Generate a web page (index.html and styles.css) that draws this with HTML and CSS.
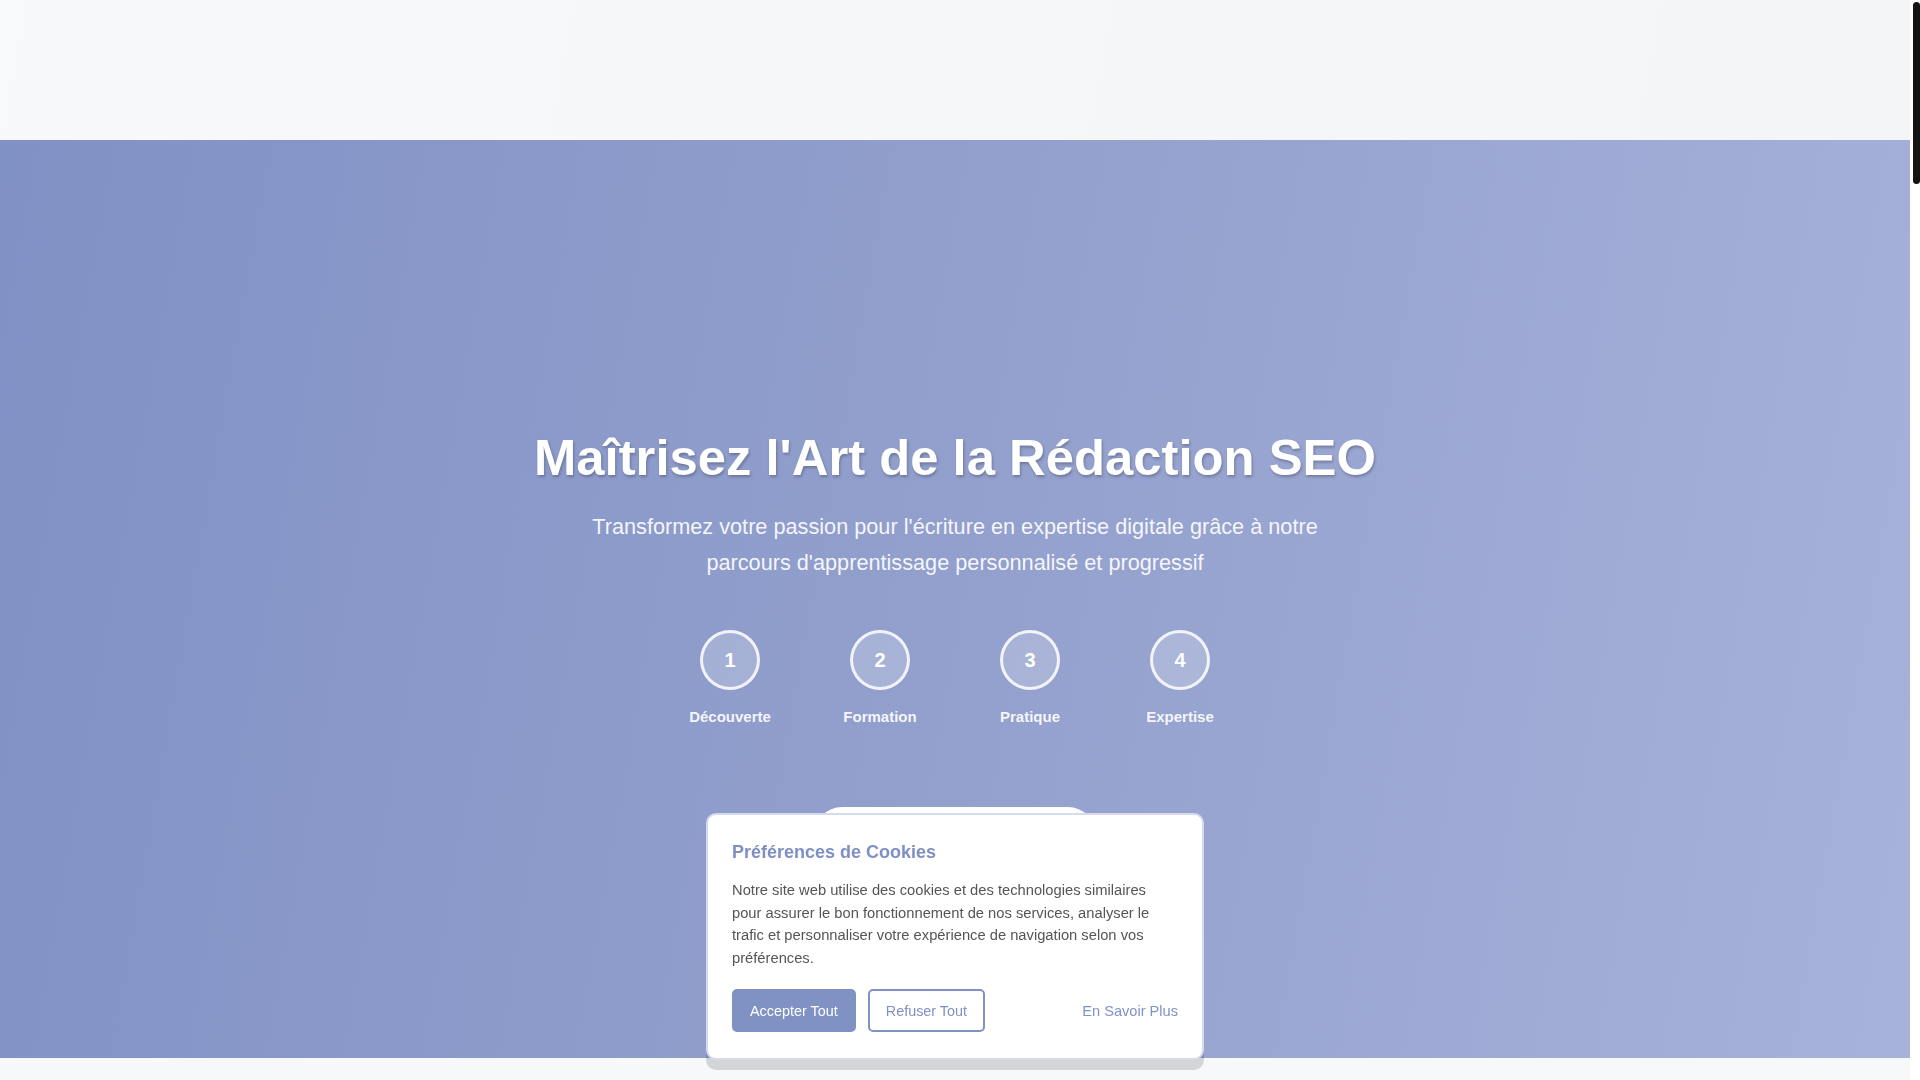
FILE: index.html
```html
<!DOCTYPE html>
<html lang="fr">
<head>
<meta charset="utf-8">
<title>Maîtrisez l'Art de la Rédaction SEO</title>
<link rel="stylesheet" href="styles.css">
</head>
<body>
<header class="site-header"></header>

<section class="hero">
  <div class="hero-inner">
    <h1 class="hero-title">Maîtrisez l'Art de la Rédaction SEO</h1>
    <p class="hero-subtitle">Transformez votre passion pour l'écriture en expertise digitale grâce à notre parcours d'apprentissage personnalisé et progressif</p>
    <div class="steps">
      <div class="step"><div class="step-circle">1</div><span class="step-label">Découverte</span></div>
      <div class="step"><div class="step-circle">2</div><span class="step-label">Formation</span></div>
      <div class="step"><div class="step-circle">3</div><span class="step-label">Pratique</span></div>
      <div class="step"><div class="step-circle">4</div><span class="step-label">Expertise</span></div>
    </div>
    <a class="hero-cta" href="#parcours">Commencer Mon Parcours</a>
  </div>
</section>

<main class="content">
  <section class="block" id="parcours"><h2>Découverte</h2><p>Comprendre les bases du référencement naturel et de l'écriture web.</p></section>
  <section class="block"><h2>Formation</h2><p>Apprendre les techniques de rédaction optimisée pour les moteurs de recherche.</p></section>
  <section class="block"><h2>Pratique</h2><p>Mettre en œuvre vos connaissances sur des projets concrets.</p></section>
  <section class="block"><h2>Expertise</h2><p>Devenir un rédacteur SEO reconnu et accompli.</p></section>
  <section class="block"><h2>Contact</h2><p>Rejoignez notre communauté de rédacteurs.</p></section>
</main>

<div class="cookie-banner">
  <h3 class="cookie-title">Préférences de Cookies</h3>
  <p class="cookie-text">Notre site web utilise des cookies et des technologies similaires pour assurer le bon fonctionnement de nos services, analyser le trafic et personnaliser votre expérience de navigation selon vos préférences.</p>
  <div class="cookie-actions">
    <button class="btn btn-primary">Accepter Tout</button>
    <button class="btn btn-outline">Refuser Tout</button>
    <a class="cookie-link" href="#">En Savoir Plus</a>
  </div>
</div>

<div class="scrollbar" aria-hidden="true"><div class="scrollbar-thumb"></div></div>
</body>
</html>
```

FILE: styles.css
```css
* { box-sizing: border-box; }

html { scrollbar-width: none; }
html::-webkit-scrollbar { display: none; }

body {
  margin: 0 10px 0 0;
  font-family: "Liberation Sans", Arial, sans-serif;
  background: #f7f8fa;
  color: #333;
}

.scrollbar {
  position: fixed;
  top: 0;
  right: 0;
  width: 10px;
  height: 100vh;
  background: #ffffff;
}

.scrollbar-thumb {
  position: absolute;
  top: 2px;
  right: 0;
  width: 7px;
  height: 182px;
  border-radius: 4px;
  background: #141414;
}

.site-header {
  height: 140px;
  background: linear-gradient(100deg, #f8f9fb 0%, #f4f5f7 100%);
}

.hero {
  min-height: 918px;
  background: linear-gradient(100deg, #8091c5 0%, #93a0cd 50%, #a6b2da 100%);
  padding-top: 287px;
}

.hero-inner {
  display: flex;
  flex-direction: column;
  align-items: center;
  text-align: center;
  color: #fff;
}

.hero-title {
  margin: 0 0 20px;
  font-size: 50.8px;
  line-height: 62px;
  font-weight: 700;
  text-shadow: 1px 2px 3px rgba(0, 0, 0, 0.25);
}

.hero-subtitle {
  margin: 0 0 50px;
  max-width: 780px;
  font-size: 21.7px;
  line-height: 35.5px;
  color: rgba(255, 255, 255, 0.92);
}

.steps {
  display: grid;
  grid-template-columns: repeat(4, 150px);
  justify-items: center;
}

.step {
  display: flex;
  flex-direction: column;
  align-items: center;
  gap: 18px;
}

.step-circle {
  width: 60px;
  height: 60px;
  border-radius: 50%;
  border: 3px solid rgba(255, 255, 255, 0.85);
  background: rgba(255, 255, 255, 0.2);
  display: flex;
  align-items: center;
  justify-content: center;
  font-size: 20px;
  font-weight: 700;
}

.step-label {
  font-size: 15px;
  font-weight: 700;
  color: rgba(255, 255, 255, 0.92);
}

.hero-cta {
  margin-top: 82px;
  width: 282px;
  padding: 18px 0;
  border-radius: 30px;
  background: #fff;
  color: #7f8fc4;
  font-weight: 700;
  font-size: 17px;
  text-decoration: none;
}

.content { padding: 0; }

.block {
  min-height: 1056px;
  padding: 80px 20px;
  text-align: center;
}

.block h2 { color: #7f8fc4; font-size: 32px; margin: 0 0 16px; }
.block p { color: #555; font-size: 18px; margin: 0; }

.cookie-banner {
  position: fixed;
  left: calc(50% - 5px);
  bottom: 20px;
  transform: translateX(-50%);
  width: 498px;
  background: #fff;
  border: 2px solid #d5daf0;
  border-radius: 10px;
  box-shadow: 0 10px 0 rgba(0, 0, 0, 0.14);
  padding: 27px 25px 26px 24px;
}

.cookie-title {
  margin: 0 0 16px;
  font-size: 18px;
  font-weight: 700;
  color: #7f8fc4;
}

.cookie-text {
  margin: 0 0 19px;
  font-size: 14.72px;
  line-height: 22.8px;
  color: #555;
}

.cookie-actions {
  display: flex;
  align-items: center;
  gap: 12px;
}

.btn {
  font-family: inherit;
  font-size: 14.4px;
  height: 43px;
  padding: 0 16px;
  border: 2px solid #8091c4;
  border-radius: 5px;
  cursor: pointer;
}

.btn-primary { background: #8091c4; color: #fff; }
.btn-outline { background: #fff; color: #8091c4; }

.cookie-link {
  margin-left: auto;
  margin-right: -1px;
  font-size: 14.6px;
  color: #8091c4;
  text-decoration: none;
}
```
